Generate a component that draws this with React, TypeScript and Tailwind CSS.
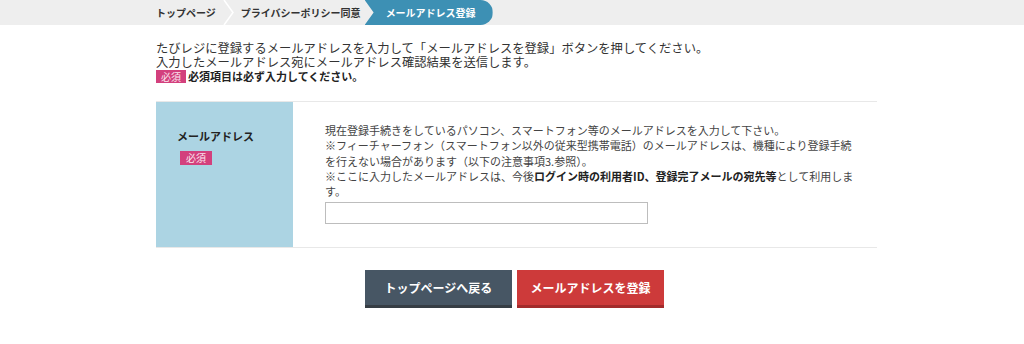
export default function App() {
  return (
    <div className="min-h-screen bg-white font-['Noto_Sans_CJK_JP',sans-serif] text-[#333]">
      {/* breadcrumb */}
      <nav className="h-[25px] bg-[#eeeeee]">
        <ol className="ml-[156px] flex h-full items-center text-[10px] font-bold leading-none text-[#333]">
          <li>トップページ</li>
          <li className="mx-[7px] flex h-full items-center">
            <svg width="11" height="25" viewBox="0 0 11 25">
              <polyline points="1,0 10,12.5 1,25" fill="none" stroke="#ffffff" strokeWidth="1.5" />
            </svg>
          </li>
          <li>プライバシーポリシー同意</li>
          <li className="ml-[4px] flex h-full items-center rounded-r-[13px] bg-[#3d90b4] pl-[21px] pr-[17px] text-white [clip-path:polygon(0_0,100%_0,100%_100%,0_100%,9px_50%)]">
            メールアドレス登録
          </li>
        </ol>
      </nav>

      <main className="ml-[156px] w-[721px] pt-[16px]">
        <div className="text-[12.3px] leading-[14px] text-[#333]">
          <p>たびレジに登録するメールアドレスを入力して「メールアドレスを登録」ボタンを押してください。</p>
          <p>入力したメールアドレス宛にメールアドレス確認結果を送信します。</p>
          <p className="flex items-center gap-[2px]">
            <span className="inline-block h-[13px] bg-[#d3407d] px-[5px] text-[10px] leading-[13px] font-normal text-[#fbe3ee]">
              必須
            </span>
            <span className="text-[11px] font-bold text-[#222]">必須項目は必ず入力してください。</span>
          </p>
        </div>

        <div className="mt-[18px] flex border-y border-[#e8e8e8]">
          <div className="w-[137px] shrink-0 bg-[#acd4e3] pl-[21px] pt-[27px]">
            <div className="text-[11px] font-bold leading-[14px] text-[#222]">メールアドレス</div>
            <span className="ml-[3px] mt-[4px] inline-block h-[14px] bg-[#d3407d] px-[6px] text-[10px] leading-[14px] text-[#fbe3ee]">
              必須
            </span>
          </div>
          <div className="flex-1 pl-[32px] pr-[22px] pt-[21px] pb-[23px] text-[11px] leading-[15.3px] text-[#444]">
            <p>現在登録手続きをしているパソコン、スマートフォン等のメールアドレスを入力して下さい。</p>
            <p>
              ※フィーチャーフォン（スマートフォン以外の従来型携帯電話）のメールアドレスは、機種により登録手続を行えない場合があります（以下の注意事項3.参照）。
            </p>
            <p>
              ※ここに入力したメールアドレスは、今後
              <b className="text-[#222]">ログイン時の利用者ID、登録完了メールの宛先等</b>
              として利用しま
              <br />
              す。
            </p>
            <input
              type="text"
              className="mt-[3px] block h-[22px] w-[323px] border border-[#bdbdbd] bg-white px-[4px] text-[12px] outline-none"
            />
          </div>
        </div>

        <div className="mt-[22px] flex justify-center gap-[5px] pr-[4px]">
          <button className="h-[38px] w-[147px] border-b-[3px] border-[#363d44] bg-[#475664] text-[12px] font-bold text-white">
            トップページへ戻る
          </button>
          <button className="h-[38px] w-[147px] border-b-[3px] border-[#a32b2b] bg-[#cd3a3a] text-[12px] font-bold text-white">
            メールアドレスを登録
          </button>
        </div>
      </main>
    </div>
  );
}
